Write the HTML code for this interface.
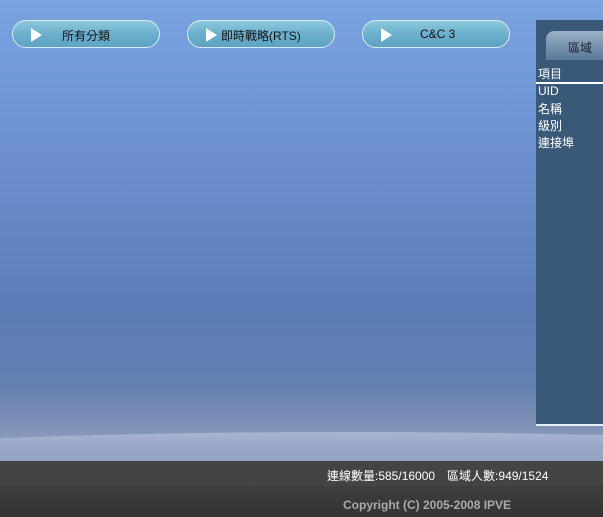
<!DOCTYPE html>
<html><head><meta charset="utf-8"><style>
html,body{margin:0;overflow:hidden;height:517px;width:603px}
#w{width:603px;height:517px;overflow:hidden;position:relative;font-family:"Liberation Sans","Noto Sans CJK TC",sans-serif;
background:linear-gradient(180deg,#7aa3e1 0%,#6c90cf 30%,#5b7cb6 60%,#6580b0 75%,#8293b8 83%,#a0acc8 89%);}
.btn{position:absolute;top:20px;width:148px;height:28px;border-radius:15px;border:1px solid #d8ecf5;
background:linear-gradient(180deg,#8cc8dc 0%,#6cb0cd 50%,#5fa3c4 100%);box-sizing:border-box;font-size:12px;color:#111;}
.btn .t{position:absolute;top:6px;text-align:left}
.btn .a{position:absolute;left:18px;top:7px;width:0;height:0;border-left:11px solid #fff;border-top:7px solid transparent;border-bottom:7px solid transparent}
.panel{position:absolute;left:536px;top:20px;width:67px;height:404px;background:#3a5878;border-bottom:2px solid #e8eef5}
.tab{position:absolute;left:10px;top:11px;width:57px;height:29px;border-radius:8px 0 0 0;background:linear-gradient(180deg,#9ab0c8,#5a7898);font-size:12px;color:#223;}
.panel .r{position:absolute;left:2px;color:#fff;font-size:12px}
.arc{position:absolute;left:-300px;top:432px;width:1300px;height:80px;border-radius:50%;background:linear-gradient(180deg,#b8c3da,#9aa9c9 20%,#8697bf 50%);opacity:.7}
.bar1{position:absolute;left:0;top:461px;width:603px;height:25px;background:#444;color:#fff;font-size:12px}
.bar2{position:absolute;left:0;top:486px;width:603px;height:31px;background:linear-gradient(#3e3e3e,#333);color:#aaa;font-size:12px;font-weight:bold}
</style></head><body><div id="w">
<div class="arc"></div>
<div class="btn" style="left:12px"><div class="a"></div><div class="t" style="left:49px">所有分類</div></div>
<div class="btn" style="left:187px"><div class="a"></div><div class="t" style="left:33px">即時戰略(RTS)</div></div>
<div class="btn" style="left:362px"><div class="a"></div><div class="t" style="left:57px">C&amp;C 3</div></div>
<div class="panel">
<div class="tab"><span style="position:absolute;left:22px;top:8px">區域</span></div>
<div class="r" style="top:45px">項目</div>
<div style="position:absolute;left:0;top:62px;width:67px;height:2px;background:#fff"></div>
<div class="r" style="top:64px">UID</div>
<div class="r" style="top:80px">名稱</div>
<div class="r" style="top:97px">級別</div>
<div class="r" style="top:114px">連接埠</div>
</div>
<div class="bar1"><span style="position:absolute;left:327px;top:6px">連線數量:585/16000　區域人數:949/1524</span></div>
<div class="bar2"><span style="position:absolute;left:343px;top:12px">Copyright (C) 2005-2008 IPVE</span></div>
</div></body></html>
